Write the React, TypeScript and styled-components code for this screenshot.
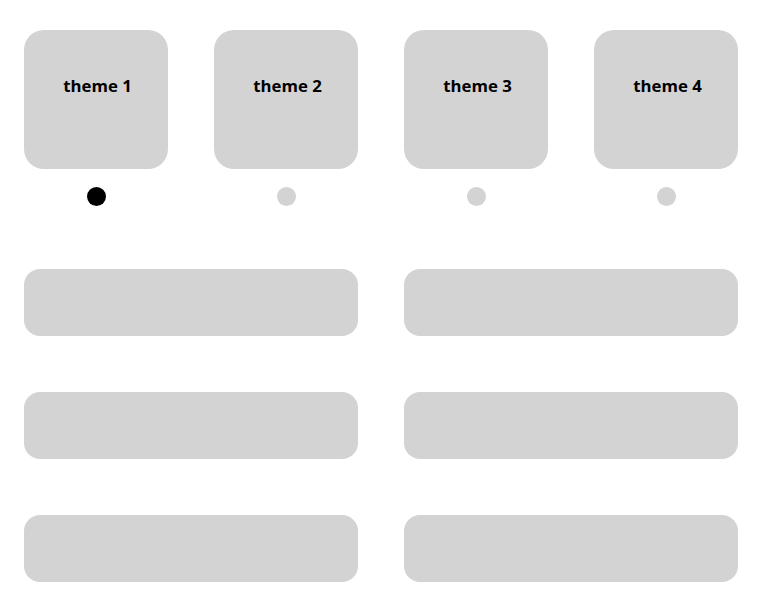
import React, { useState } from 'react';
import styled, { createGlobalStyle } from 'styled-components';

const themes = ['theme 1', 'theme 2', 'theme 3', 'theme 4'];

const App: React.FC = () => {
    const [active, setActive] = useState(0);

    return (
        <Page>
            <GlobalStyle />
            <ThemeGrid>
                {themes.map((t, i) => (
                    <ThemeColumn key={t}>
                        <ThemeCard onClick={() => setActive(i)}>{t}</ThemeCard>
                        <Dot $active={i === active} />
                    </ThemeColumn>
                ))}
            </ThemeGrid>
            <RowGrid>
                {Array.from({ length: 6 }).map((_, i) => (
                    <RowBlock key={i} />
                ))}
            </RowGrid>
        </Page>
    );
};

const GlobalStyle = createGlobalStyle`
  body {
    margin: 0;
    background: #ffffff;
    font-family: "Open Sans", "Noto Sans", sans-serif;
  }
`;

const Page = styled.div`
  width: 714px;
  padding: 30px 0 0 24px;
`;

const ThemeGrid = styled.div`
  display: grid;
  grid-template-columns: repeat(4, 144px);
  column-gap: 46px;
`;

const ThemeColumn = styled.div`
  display: flex;
  flex-direction: column;
  align-items: center;
`;

const ThemeCard = styled.div`
  width: 144px;
  height: 139px;
  box-sizing: border-box;
  padding: 44px 0 0 3px;
  border-radius: 20px;
  background-color: #d3d3d3;
  color: #000000;
  font-size: 16.8px;
  font-weight: 700;
  line-height: 24px;
  text-align: center;
  cursor: pointer;
`;

const Dot = styled.span<{ $active: boolean }>`
  display: block;
  width: 19px;
  height: 19px;
  margin-top: 18px;
  border-radius: 50%;
  background-color: ${(p) => (p.$active ? '#000000' : '#d3d3d3')};
`;

const RowGrid = styled.div`
  display: grid;
  grid-template-columns: repeat(2, 334px);
  column-gap: 46px;
  row-gap: 56px;
  margin-top: 63px;
`;

const RowBlock = styled.div`
  height: 67px;
  border-radius: 16px;
  background-color: #d3d3d3;
`;

export default App;
